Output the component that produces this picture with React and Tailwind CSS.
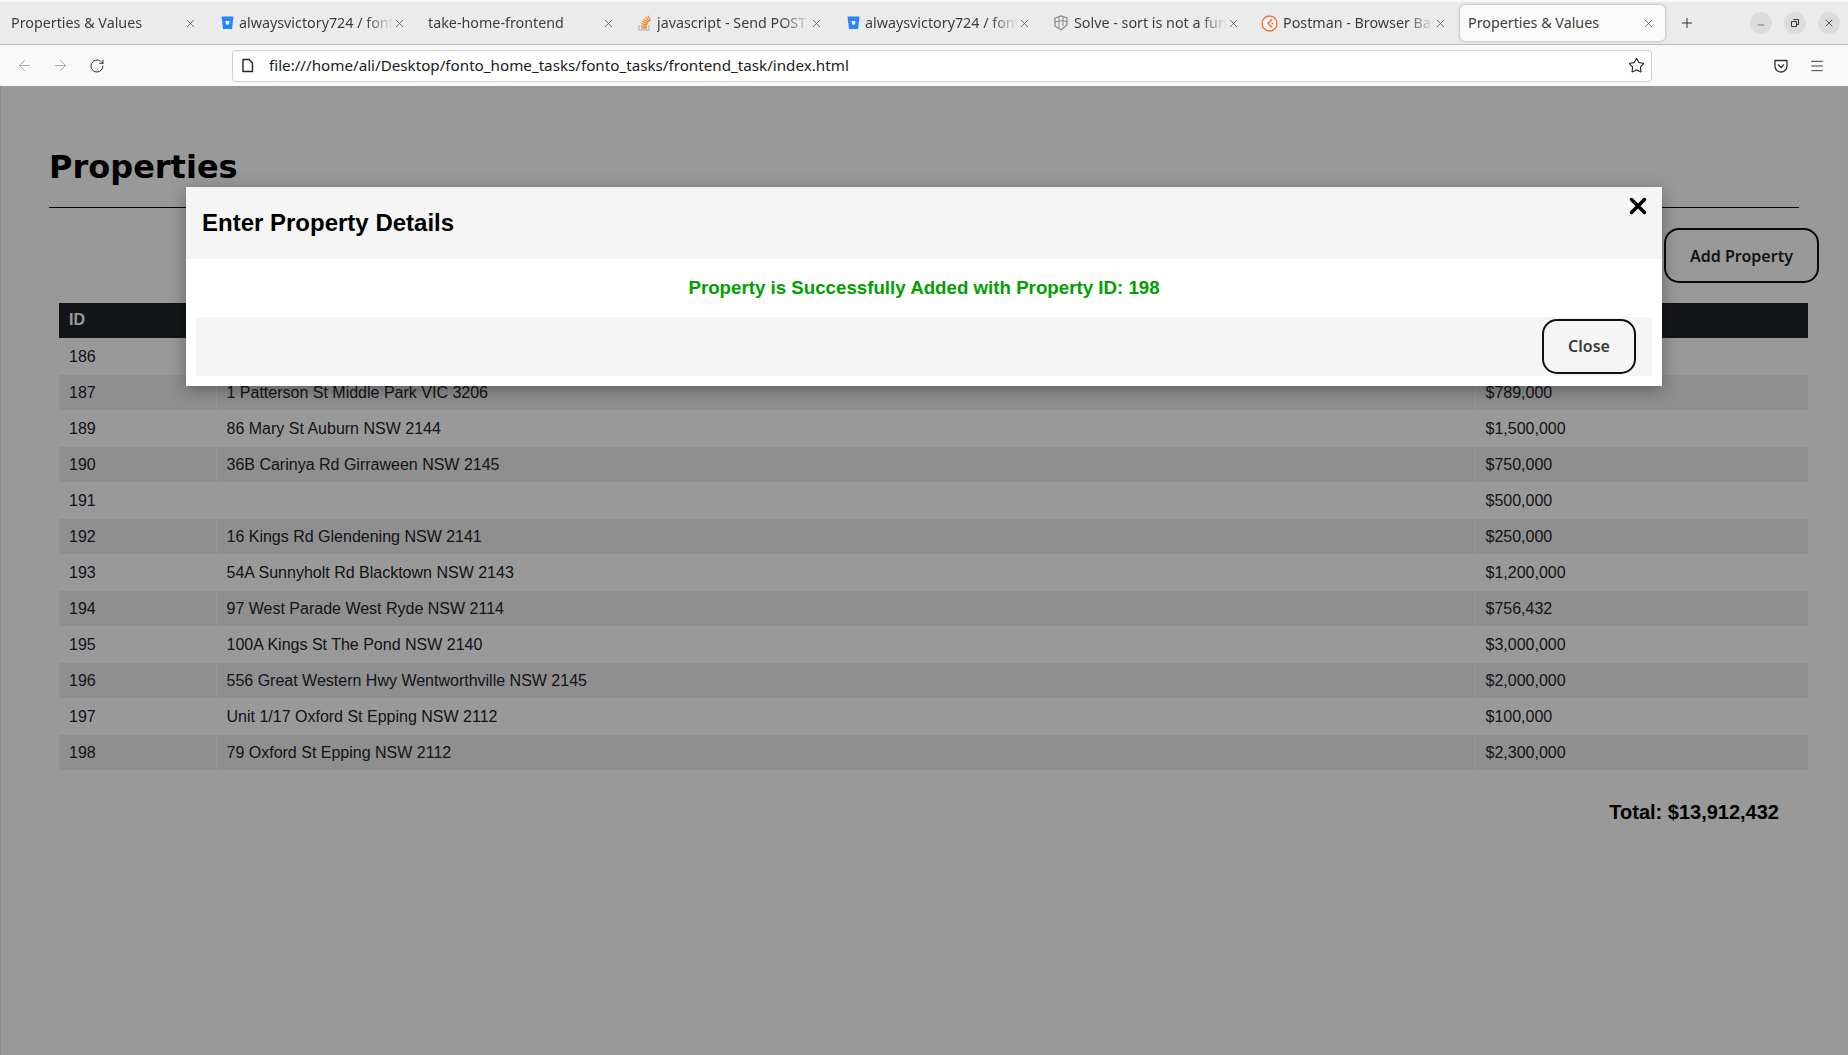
import React from "react";
import { X, ArrowLeft, ArrowRight, RotateCw, Star, Plus, Minus, Menu } from "lucide-react";

const Bitbucket = () => (
  <svg width="13" height="14" viewBox="0 0 13 14" className="shrink-0">
    <path d="M0.5 0.5H12.5L11 13H2Z" fill="#2684ff" />
    <path d="M4.5 5H8.5L8 8.5H5Z" fill="#fff" />
  </svg>
);
const StackOverflow = () => (
  <svg width="14" height="16" viewBox="0 0 14 16" className="shrink-0">
    <path d="M1 10V15H11V10" fill="none" stroke="#bcbbbb" strokeWidth="1.4" />
    <path d="M3 13H9" stroke="#e08a4a" strokeWidth="1.3" />
    <path d="M3 10.8L9 11.4M3.4 8.6L9.2 9.8M4.2 6.3L9.6 8.6M5.6 4.2L10.4 7.6M7.6 2.2L11.4 6.6M10 0.8L12.4 6" fill="none" stroke="#f48024" strokeWidth="1.2" />
  </svg>
);
const Cube = () => (
  <svg width="16" height="16" viewBox="0 0 16 16" className="shrink-0">
    <path d="M2 3L8 1L14 3V10L8 15L2 11Z" fill="none" stroke="#8a8a8a" strokeWidth="1.3" />
    <path d="M6 1.5V13.5M2 7L10 5.5L14 7M10 2V11" fill="none" stroke="#8a8a8a" strokeWidth="1" />
  </svg>
);
const Postman = () => (
  <svg width="17" height="17" viewBox="0 0 17 17" className="shrink-0">
    <circle cx="8.5" cy="8.5" r="7.5" fill="#fff" stroke="#ff6c37" strokeWidth="1.4" />
    <path d="M11 4L7 8.5L11 12.5" fill="none" stroke="#ff6c37" strokeWidth="1.5" />
    <circle cx="11.5" cy="8.5" r="1" fill="#ff6c37" />
  </svg>
);

const tabs = [
  { title: "Properties & Values", w: "w-[207px]", pl: "pl-[11px]" },
  { title: "alwaysvictory724 / fonto_tasks", w: "w-[209px]", pl: "pl-[14px]", icon: <Bitbucket /> },
  { title: "take-home-frontend", w: "w-[209px]", pl: "pl-[12px]" },
  { title: "javascript - Send POST data", w: "w-[208px]", pl: "pl-[13px]", icon: <StackOverflow /> },
  { title: "alwaysvictory724 / fonto_tasks", w: "w-[208px]", pl: "pl-[14px]", icon: <Bitbucket /> },
  { title: "Solve - sort is not a function", w: "w-[209px]", pl: "pl-[12px]", icon: <Cube /> },
  { title: "Postman - Browser Based", w: "w-[207px]", pl: "pl-[11px]", icon: <Postman /> },
];

const rows = [
  ["186", "", ""],
  ["187", "1 Patterson St Middle Park VIC 3206", "$789,000"],
  ["189", "86 Mary St Auburn NSW 2144", "$1,500,000"],
  ["190", "36B Carinya Rd Girraween NSW 2145", "$750,000"],
  ["191", "", "$500,000"],
  ["192", "16 Kings Rd Glendening NSW 2141", "$250,000"],
  ["193", "54A Sunnyholt Rd Blacktown NSW 2143", "$1,200,000"],
  ["194", "97 West Parade West Ryde NSW 2114", "$756,432"],
  ["195", "100A Kings St The Pond NSW 2140", "$3,000,000"],
  ["196", "556 Great Western Hwy Wentworthville NSW 2145", "$2,000,000"],
  ["197", "Unit 1/17 Oxford St Epping NSW 2112", "$100,000"],
  ["198", "79 Oxford St Epping NSW 2112", "$2,300,000"],
];

function Tab({ t }) {
  return (
    <div className={`${t.w} ${t.pl} flex items-center shrink-0 pr-[10px]`}>
      {t.icon && <span className="mr-[5px] flex shrink-0">{t.icon}</span>}
      <span className="flex-1 overflow-hidden whitespace-nowrap [mask-image:linear-gradient(to_left,transparent,black_28px)]">{t.title}</span>
      <X size={13} strokeWidth={1.4} className="shrink-0 text-[#555]" />
    </div>
  );
}

export default function App() {
  return (
    <div className="relative flex h-[1055px] w-full flex-col overflow-hidden bg-white font-['Liberation_Sans',sans-serif] text-[16px] text-[#212529]">
      <div className="flex h-[45px] shrink-0 items-stretch border-t-2 border-b border-t-[#f7f7f7] border-b-[#b9b9b9] bg-[#ebebeb] font-['Noto_Sans',sans-serif] text-[14.3px] text-[#3d3d3d]">
        {tabs.map((t, i) => <Tab key={i} t={t} />)}
        <div className="ml-[3px] mt-[3px] flex h-[36px] w-[205px] shrink-0 items-center rounded-[5px] bg-[#fafafa] pl-[8px] pr-[10px] shadow-[0_0_3px_rgba(0,0,0,0.35)]">
          <span className="flex-1">Properties &amp; Values</span>
          <X size={13} strokeWidth={1.4} className="text-[#555]" />
        </div>
        <div className="ml-[14px] flex items-center">
          <Plus size={16} strokeWidth={1.5} className="text-[#333]" />
        </div>
        <div className="ml-auto flex items-center gap-[12px] pr-[8px]">
          <span className="flex h-[22px] w-[22px] items-center justify-center rounded-full bg-[#dcdcdc]"><Minus size={10} strokeWidth={1.5} className="mt-[3px]" /></span>
          <span className="flex h-[22px] w-[22px] items-center justify-center rounded-full bg-[#dcdcdc]">
            <svg width="10" height="10" viewBox="0 0 10 10"><path d="M3.5 1.5H8.5V6.5H7M1.5 3.5H6.5V8.5H1.5Z" fill="none" stroke="#333" /></svg>
          </span>
          <span className="flex h-[22px] w-[22px] items-center justify-center rounded-full bg-[#dcdcdc]"><X size={12} strokeWidth={1.6} /></span>
        </div>
      </div>

      <div className="flex h-[41px] shrink-0 items-center bg-[#f9f9f9] text-[#333]">
        <ArrowLeft size={17} strokeWidth={1.3} className="ml-[16px] text-[#a0a0a0]" />
        <ArrowRight size={17} strokeWidth={1.3} className="ml-[19px] text-[#a0a0a0]" />
        <RotateCw size={16} strokeWidth={1.5} className="ml-[20px]" />
        <div className="ml-[127px] flex h-[32px] w-[1420px] items-center rounded-[4px] border border-[#cfcfcf] bg-white pl-[8px] pr-[6px] font-['Noto_Sans',sans-serif] text-[15.2px] text-[#1a1a1a]">
          <svg width="13" height="15" viewBox="0 0 13 15" className="shrink-0"><path d="M2 1.5H8L11.5 5V13.5H2Z" fill="none" stroke="#222" strokeWidth="1.4" strokeLinejoin="round" /></svg>
          <span className="ml-[15px] flex-1">file:///home/ali/Desktop/fonto_home_tasks/fonto_tasks/frontend_task/index.html</span>
          <Star size={17} strokeWidth={1.5} />
        </div>
        <svg width="16" height="16" viewBox="0 0 16 16" className="ml-[121px]"><path d="M2 2.5H14V8A6 6 0 0 1 2 8Z" fill="none" stroke="#333" strokeWidth="1.3" strokeLinejoin="round" /><path d="M5 6.5L8 9.5L11 6.5" fill="none" stroke="#333" strokeWidth="1.3" /></svg>
        <Menu size={16} strokeWidth={1.4} className="ml-[20px]" />
      </div>

      <main className="relative flex-1 border-l border-[#e6e6e6] pl-[48px] pr-[49px]">
        <h1 className="flex h-[122px] items-end border-b border-black pb-[16px] font-['DejaVu_Sans',sans-serif] text-[32px] font-bold leading-[48px] text-black">Properties</h1>
        <div className="mr-[-20px] mt-[20px] flex justify-end">
          <button className="h-[55px] w-[155px] rounded-[15px] border-2 border-[#111] font-['Noto_Sans',sans-serif] text-[16px] font-semibold text-[#212529]">Add Property</button>
        </div>
        <table className="ml-[10px] mt-[20px] w-[1749px] table-fixed border-collapse text-left">
          <colgroup>
            <col className="w-[157px]" />
            <col className="w-[1259px]" />
            <col />
          </colgroup>
          <thead>
            <tr className="h-[35px] bg-[#212529] font-bold text-white">
              <th className="pl-[10px] font-semibold">ID</th>
              <th className="pl-[10px] font-semibold">Address</th>
              <th className="pl-[10px] font-semibold">Value</th>
            </tr>
          </thead>
          <tbody>
            {rows.map((r, i) => (
              <tr key={r[0]} className={`h-[36px] border-t border-white ${i % 2 === 1 ? "bg-[#eeeeee]" : "bg-white"}`}>
                <td className="border-r border-white pl-[10px] pt-[1px]">{r[0]}</td>
                <td className="border-r border-white pl-[10px] pt-[1px]">{r[1]}</td>
                <td className="pl-[10px] pt-[1px]">{r[2]}</td>
              </tr>
            ))}
          </tbody>
        </table>
        <p className="mt-[27px] text-right pr-[20px] text-[20px] font-bold text-black">Total: $13,912,432</p>
      </main>

      <div className="absolute inset-x-0 bottom-0 top-[86px] bg-black/40" />

      <div className="absolute left-[186px] top-[187px] w-[1476px] bg-white shadow-[0_4px_16px_rgba(0,0,0,0.35)]">
        <div className="relative flex h-[72px] items-center bg-[#f5f5f5] pl-[16px] text-[24px] font-bold text-black">
          Enter Property Details
          <X size={26} strokeWidth={3.2} className="absolute right-[11px] top-[6px] text-black" />
        </div>
        <p className="flex h-[58px] items-center justify-center pt-[1px] text-[18.72px] font-bold text-[#00a000]">Property is Successfully Added with Property ID: 198</p>
        <div className="mx-[10px] mb-[10px] flex h-[59px] items-center justify-end bg-[#f5f5f5] pr-[16px]">
          <button className="h-[55px] w-[94px] rounded-[15px] border-2 border-[#111] pb-[2px] font-['Noto_Sans',sans-serif] text-[16px] font-semibold text-[#3a3a3a]">Close</button>
        </div>
      </div>
    </div>
  );
}
